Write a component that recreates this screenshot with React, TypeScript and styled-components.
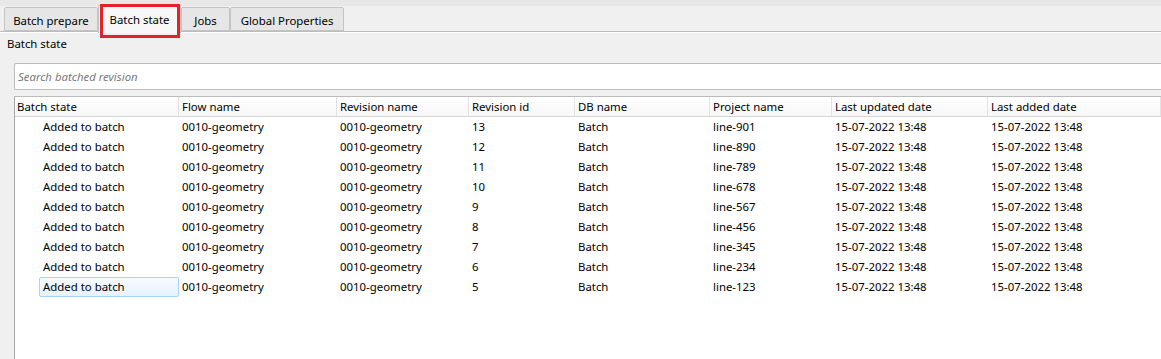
import React from "react";
import styled, { createGlobalStyle } from "styled-components";

const GlobalStyle = createGlobalStyle`
  html, body { margin: 0; padding: 0; }
  body {
    background: #f0f0f0;
    font-family: "Noto Sans", "Open Sans", sans-serif;
    font-size: 11.4px;
    color: #000;
    overflow: hidden;
  }
`;

const Page = styled.div`
  width: 1161px;
  height: 359px;
  display: flex;
  flex-direction: column;
  overflow: hidden;
`;

const TabBar = styled.div`
  position: relative;
  height: 32px;
  box-sizing: border-box;
  display: flex;
  align-items: flex-end;
  padding-left: 4px;
  background: linear-gradient(#e7e7e7 0, #e7e7e7 6px, #f0f0f0 6px);
  border-bottom: 1px solid #bcbcbc;
  box-shadow: 0 1px 0 #ffffff;
`;

const Tab = styled.div<{ $active?: boolean; $w: number }>`
  box-sizing: border-box;
  width: ${(p) => p.$w}px;
  height: ${(p) => (p.$active ? "28px" : "24px")};
  margin-bottom: ${(p) => (p.$active ? "-2px" : "0")};
  display: flex;
  align-items: center;
  justify-content: center;
  border: 1px solid #c4c4c4;
  border-bottom: ${(p) => (p.$active ? "none" : "1px solid #c4c4c4")};
  border-radius: 2px 2px 0 0;
  background: ${(p) => (p.$active ? "#f7f7f7" : "#e6e6e6")};
  position: relative;
  z-index: ${(p) => (p.$active ? 2 : 1)};
  white-space: nowrap;
  padding-top: ${(p) => (p.$active ? "0" : "2px")};
`;

const Highlight = styled.div`
  position: absolute;
  left: 100px;
  top: 4px;
  width: 80px;
  height: 34px;
  box-sizing: border-box;
  border: 3px solid #e2232b;
  z-index: 5;
  pointer-events: none;
`;

const SectionLabel = styled.div`
  padding: 4px 0 0 7px;
  height: 16px;
  line-height: 16px;
`;

const SearchBox = styled.div`
  margin: 11px 0 0 14px;
  height: 27px;
  box-sizing: border-box;
  border: 1px solid #bcbcbc;
  border-right: none;
  border-radius: 2px 0 0 2px;
  background: #ffffff;
  display: flex;
  align-items: center;
  padding-left: 3px;
  color: #7a7a7a;
  font-style: italic;
`;

const Table = styled.div`
  margin: 6px 0 0 14px;
  flex: 1;
  background: #ffffff;
  border-left: 1px solid #a9a9a9;
  border-top: 1px solid #bcbcbc;
  overflow: hidden;
`;

const COLS = "165px 158px 132px 106px 135px 122px 156px 1fr";

const HeaderRow = styled.div`
  display: grid;
  grid-template-columns: ${COLS};
  height: 19px;
  background: linear-gradient(#ffffff, #f7f7f7);
  border-bottom: 1px solid #d5d5d5;
  margin-left: -1px;
`;

const HeaderCell = styled.div`
  padding-left: 3px;
  line-height: 19px;
  border-right: 1px solid #e3e3e3;
  white-space: nowrap;
  overflow: hidden;
`;

const Row = styled.div`
  display: grid;
  grid-template-columns: ${COLS};
  height: 20px;
  margin-left: -1px;
`;

const Cell = styled.div`
  box-sizing: border-box;
  line-height: 20px;
  padding-left: 3px;
  white-space: nowrap;
  overflow: hidden;
`;

const StateCell = styled.div`
  padding-left: 25px;
  display: flex;
`;

const StateText = styled.div<{ $focused?: boolean }>`
  flex: 1;
  box-sizing: border-box;
  height: 20px;
  line-height: ${(p) => (p.$focused ? "18px" : "20px")};
  border: ${(p) => (p.$focused ? "1px solid #a9d3f2" : "none")};
  padding-left: ${(p) => (p.$focused ? "3px" : "4px")};
  border-radius: 2px;
  background: ${(p) =>
    p.$focused ? "linear-gradient(#f6fbff, #e6f2fc)" : "transparent"};
  white-space: nowrap;
`;

const columns = [
  "Batch state",
  "Flow name",
  "Revision name",
  "Revision id",
  "DB name",
  "Project name",
  "Last updated date",
  "Last added date",
];

const tabs = [
  { label: "Batch prepare", w: 94 },
  { label: "Batch state", w: 83, active: true },
  { label: "Jobs", w: 49 },
  { label: "Global Properties", w: 114 },
];

const rows = [
  { id: "13", project: "line-901" },
  { id: "12", project: "line-890" },
  { id: "11", project: "line-789" },
  { id: "10", project: "line-678" },
  { id: "9", project: "line-567" },
  { id: "8", project: "line-456" },
  { id: "7", project: "line-345" },
  { id: "6", project: "line-234" },
  { id: "5", project: "line-123" },
];

export default function App() {
  return (
    <Page>
      <GlobalStyle />
      <TabBar>
        {tabs.map((t) => (
          <Tab key={t.label} $w={t.w} $active={t.active}>
            {t.label}
          </Tab>
        ))}
        <Highlight />
      </TabBar>
      <SectionLabel>Batch state</SectionLabel>
      <SearchBox>Search batched revision</SearchBox>
      <Table>
        <HeaderRow>
          {columns.map((c) => (
            <HeaderCell key={c}>{c}</HeaderCell>
          ))}
        </HeaderRow>
        {rows.map((r, i) => (
          <Row key={r.id}>
            <StateCell>
              <StateText $focused={i === rows.length - 1}>Added to batch</StateText>
            </StateCell>
            <Cell>0010-geometry</Cell>
            <Cell>0010-geometry</Cell>
            <Cell>{r.id}</Cell>
            <Cell>Batch</Cell>
            <Cell>{r.project}</Cell>
            <Cell>15-07-2022 13:48</Cell>
            <Cell>15-07-2022 13:48</Cell>
          </Row>
        ))}
      </Table>
    </Page>
  );
}
